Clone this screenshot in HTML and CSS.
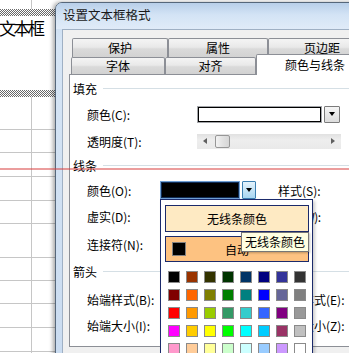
FILE: index.html
```html
<!DOCTYPE html>
<html lang="zh-CN">
<head>
  <meta charset="UTF-8">
  <meta name="viewport" content="width=device-width, initial-scale=1">
  <title>设置文本框格式</title>
  <link rel="stylesheet" href="styles.css">
</head>
<body>

  <svg class="defs" width="0" height="0">
    <defs>
      <pattern id="dots" width="2" height="2" patternUnits="userSpaceOnUse">
        <rect width="2" height="2" fill="#fff"/>
        <rect x="0" y="0" width="1" height="1" fill="#6a6a6a"/>
        <rect x="1" y="1" width="1" height="1" fill="#6a6a6a"/>
      </pattern>
    </defs>
  </svg>

  <div class="sheet">
    <div class="row" style="height:130px"></div>
    <div class="row" style="height:23px"></div>
    <div class="row" style="height:24px"></div>
    <div class="row" style="height:24px"></div>
    <div class="row" style="height:23px"></div>
    <div class="row" style="height:34px"></div>
    <div class="row" style="height:23px"></div>
    <div class="row" style="height:23px"></div>
    <div class="row" style="height:24px"></div>
    <div class="row" style="height:24px"></div>

    <div class="textbox">
      <svg class="hatch" width="70" height="7"><rect width="70" height="7" fill="url(#dots)"/></svg>
      <div class="textbox-text">文本框</div>
      <svg class="hatch" width="70" height="7"><rect width="70" height="7" fill="url(#dots)"/></svg>
    </div>
  </div>

  <div class="dialog">
    <div class="titlebar">设置文本框格式</div>
    <div class="client">
      <div class="tab-row">
        <div class="tab" style="width:96px">保护</div>
        <div class="tab" style="width:100px">属性</div>
        <div class="tab" style="width:108px">页边距</div>
      </div>
      <div class="tab-row second">
        <div class="tab" style="width:94px">字体</div>
        <div class="tab" style="width:91px">对齐</div>
        <div class="tab active" style="width:118px">颜色与线条</div>
      </div>

      <div class="panel">
        <div class="group g-fill"><span>填充</span><i></i></div>

        <div class="field f-fillcolor">
          <div class="label wide">颜色(C):</div>
          <div class="colorbox"><div class="colorbox-inner"></div></div>
          <div class="dropbtn"><b></b></div>
        </div>

        <div class="field f-alpha">
          <div class="label wide">透明度(T):</div>
          <div class="track">
            <span class="arrow-left"></span>
            <span class="thumb"></span>
            <span class="arrow-right"></span>
          </div>
        </div>

        <div class="group g-line"><span>线条</span><i></i></div>

        <div class="field f-linecolor">
          <div class="label">颜色(O):</div>
          <div class="linecombo"></div>
          <div class="dropbtn pressed"><b></b></div>
          <div class="label-right">样式(S):</div>
        </div>

        <div class="field f-dash">
          <div class="label">虚实(D):</div>
          <div class="placeholder"></div>
          <div class="label-right tight">粗细(W):</div>
        </div>

        <div class="field f-connector">
          <div class="label">连接符(N):</div>
        </div>

        <div class="group g-arrow"><span>箭头</span><i></i></div>

        <div class="field f-begin">
          <div class="label">始端样式(B):</div>
          <div class="placeholder"></div>
          <div class="label-right">末端样式(E):</div>
        </div>

        <div class="field f-size">
          <div class="label">始端大小(I):</div>
          <div class="placeholder"></div>
          <div class="label-right">末端大小(Z):</div>
        </div>
      </div>
    </div>
  </div>

  <div class="guide"></div>

  <div class="popup">
    <div class="popitem hover">无线条颜色</div>
    <div class="popitem checked">
      <span class="auto-swatch"></span>
      <span class="popitem-text">自动</span>
    </div>
    <div class="palette">
      <span style="background:#000000"></span>
      <span style="background:#993300"></span>
      <span style="background:#333300"></span>
      <span style="background:#003300"></span>
      <span style="background:#003366"></span>
      <span style="background:#000080"></span>
      <span style="background:#333399"></span>
      <span style="background:#333333"></span>

      <span style="background:#800000"></span>
      <span style="background:#ff6600"></span>
      <span style="background:#808000"></span>
      <span style="background:#008000"></span>
      <span style="background:#008080"></span>
      <span style="background:#0000ff"></span>
      <span style="background:#666699"></span>
      <span style="background:#808080"></span>

      <span style="background:#ff0000"></span>
      <span style="background:#ff9900"></span>
      <span style="background:#99cc00"></span>
      <span style="background:#339966"></span>
      <span style="background:#33cccc"></span>
      <span style="background:#3366ff"></span>
      <span style="background:#800080"></span>
      <span style="background:#999999"></span>

      <span style="background:#ff00ff"></span>
      <span style="background:#ffcc00"></span>
      <span style="background:#ffff00"></span>
      <span style="background:#00ff00"></span>
      <span style="background:#00ffff"></span>
      <span style="background:#00ccff"></span>
      <span style="background:#993366"></span>
      <span style="background:#c0c0c0"></span>

      <span style="background:#ff99cc"></span>
      <span style="background:#ffcc99"></span>
      <span style="background:#ffff99"></span>
      <span style="background:#ccffcc"></span>
      <span style="background:#ccffff"></span>
      <span style="background:#99ccff"></span>
      <span style="background:#cc99ff"></span>
      <span style="background:#ffffff"></span>
    </div>
  </div>

  <div class="tooltip">无线条颜色</div>

</body>
</html>
```

FILE: styles.css
```css
* {
  box-sizing: border-box;
}

body {
  margin: 0;
  width: 349px;
  height: 353px;
  overflow: hidden;
  position: relative;
  font-family: "Noto Sans CJK SC", "Liberation Sans", sans-serif;
  font-size: 12px;
  color: #000;
  background: #fff;
}

.defs {
  position: absolute;
}

/* planilha ao fundo */
.sheet {
  height: 100%;
  position: relative;
  background: #fff linear-gradient(to right, transparent 31px, #c6c6c6 31px, #c6c6c6 32px, transparent 32px);
}

.row {
  border-bottom: 1px solid #c6c6c6;
}

.textbox {
  position: absolute;
  left: 0;
  top: 9px;
  width: 70px;
  height: 88px;
  background: #fff;
  display: flex;
  flex-direction: column;
}

.hatch {
  display: block;
  flex-shrink: 0;
}

.textbox-text {
  flex: 1;
  font-size: 17px;
  letter-spacing: -2.5px;
  margin-left: -1px;
  line-height: 20px;
  padding-top: 2px;
}

/* janela do dialogo */
.dialog {
  position: absolute;
  left: 55px;
  top: 2px;
  width: 340px;
  height: 380px;
  border: 1px solid #56677a;
  border-radius: 7px 7px 0 0;
  background: linear-gradient(to bottom, #c4d8ee 0, #d6e5f5 40px, #c9dbf0 100%);
  box-shadow: -2px 0 4px rgba(0, 0, 0, 0.35);
}

.titlebar {
  height: 26px;
  line-height: 24px;
  padding-left: 7px;
  font-size: 12.5px;
  color: #1a1a1a;
  background: linear-gradient(to bottom, #b8cfe9 0, #d3e3f5 45%, #e0ebf8 100%);
  border-radius: 6px 6px 0 0;
}

.client {
  margin-left: 6px;
  height: 360px;
  padding: 8px 0 0 6px;
  background: #f0f0f0;
  border-left: 1px solid #9fb0c4;
  border-top: 1px solid #9fb0c4;
}

.tab-row {
  display: flex;
  margin-left: 3px;
  height: 19px;
}

.tab-row.second {
  margin-left: 2px;
  height: 17px;
}

.tab {
  height: 19px;
  border: 1px solid #8c8f96;
  border-bottom: none;
  border-radius: 2px 2px 0 0;
  background: linear-gradient(to bottom, #f4f4f4 0, #e9e9e9 45%, #dadada 55%, #d2d2d2 100%);
  text-align: center;
  line-height: 17px;
  flex-shrink: 0;
}

.tab-row.second .tab {
  height: 17px;
  line-height: 15px;
}

.tab-row.second .tab.active {
  position: relative;
  z-index: 1;
  height: 21px;
  margin-top: -3px;
  line-height: 19px;
  background: #fff;
}

.panel {
  width: 312px;
  height: 273px;
  border: 1px solid #8c8f96;
  background: #fff;
  padding-left: 3px;
}

.group {
  display: flex;
  align-items: center;
  height: 16px;
}

.group i {
  flex: 1;
  height: 1px;
  margin-left: 6px;
  background: #d5dfe5;
}

.g-fill { margin-top: 5px; }
.g-line { margin-top: 5px; }
.g-arrow { margin-top: 8px; }

.field {
  display: flex;
  align-items: center;
  height: 22px;
  padding-left: 14px;
}

.f-fillcolor { margin-top: 7px; }
.f-alpha { margin-top: 5px; }
.f-linecolor { margin-top: 6px; }
.f-dash { margin-top: 4px; }
.f-connector { margin-top: 6px; }
.f-begin { margin-top: 9px; }
.f-size { margin-top: 4px; }

.label {
  width: 73px;
  flex-shrink: 0;
  white-space: nowrap;
}

.label.wide {
  width: 110px;
}

.label-right {
  margin-left: 22px;
  white-space: nowrap;
}

.label-right.tight {
  letter-spacing: -0.6px;
}

.placeholder {
  width: 96px;
  flex-shrink: 0;
}

.colorbox {
  width: 125px;
  height: 17px;
  border: 1px solid #a3a5a9;
}

.colorbox-inner {
  height: 100%;
  border: 1px solid #000;
  background: #fff;
}

.dropbtn {
  width: 16px;
  height: 17px;
  margin-left: 2px;
  border: 1px solid #7b7b7b;
  border-radius: 1px;
  background: linear-gradient(to bottom, #f5f5f5, #dcdcdc);
  display: flex;
  align-items: center;
  justify-content: center;
}

.dropbtn b {
  width: 0;
  height: 0;
  border-left: 3.5px solid transparent;
  border-right: 3.5px solid transparent;
  border-top: 4px solid #000;
}

.dropbtn.pressed {
  width: 14px;
  height: 18px;
  border-color: #3c7fb1;
  background: linear-gradient(to bottom, #e4f3fc, #a9d6f1);
}

.track {
  width: 144px;
  height: 15px;
  background: linear-gradient(to bottom, #e1e1e1, #eeeeee 40%, #e9e9e9);
  display: flex;
  align-items: center;
  padding: 0 6px;
}

.arrow-left,
.arrow-right {
  width: 0;
  height: 0;
  border-top: 3.5px solid transparent;
  border-bottom: 3.5px solid transparent;
}

.arrow-left {
  border-right: 4px solid #606060;
}

.arrow-right {
  border-left: 4px solid #606060;
  margin-left: auto;
}

.thumb {
  width: 15px;
  height: 13px;
  margin-left: 8px;
  border: 1px solid #979797;
  border-radius: 2px;
  background: linear-gradient(to right, #f3f3f3, #e2e2e2 50%, #d6d6d6);
}

.linecombo {
  width: 80px;
  height: 18px;
  border: 1px solid #6f9fd3;
  background: #000;
  box-shadow: inset 0 0 0 1px #0f2a52;
}

/* linha-guia vermelha */
.guide {
  position: absolute;
  left: 0;
  top: 168px;
  width: 100%;
  height: 2px;
  background: rgba(215, 60, 60, 0.5);
}

/* menu de cores */
.popup {
  position: absolute;
  left: 160px;
  top: 199px;
  width: 153px;
  height: 170px;
  border: 1px solid #1b2a6b;
  background: #fff;
  padding: 5px 3px 0 4px;
  box-shadow: 2px 2px 3px rgba(0, 0, 0, 0.2);
}

.popitem {
  height: 27px;
  border: 1px solid #1b2a6b;
  display: flex;
  align-items: center;
  justify-content: center;
}

.popitem.hover {
  background: #feeac3;
}

.popitem.checked {
  height: 26px;
  margin-top: 4px;
  background: #fdc281;
  justify-content: flex-start;
  padding-left: 6px;
}

.auto-swatch {
  width: 14px;
  height: 14px;
  background: #000;
  border: 1px solid #808080;
  flex-shrink: 0;
}

.popitem-text {
  flex: 1;
  text-align: center;
  margin-right: 20px;
}

.palette {
  display: grid;
  grid-template-columns: repeat(8, 12px);
  grid-auto-rows: 12px;
  gap: 6px;
  margin-top: 9px;
  padding-left: 3px;
}

.palette span {
  border: 1px solid #8a8a8a;
}

.tooltip {
  position: absolute;
  left: 241px;
  top: 232px;
  width: 68px;
  height: 20px;
  border: 1px solid #767676;
  background: #ffffe1;
  line-height: 18px;
  padding-left: 3px;
  white-space: nowrap;
  box-shadow: 1px 1px 2px rgba(0, 0, 0, 0.25);
}
```
